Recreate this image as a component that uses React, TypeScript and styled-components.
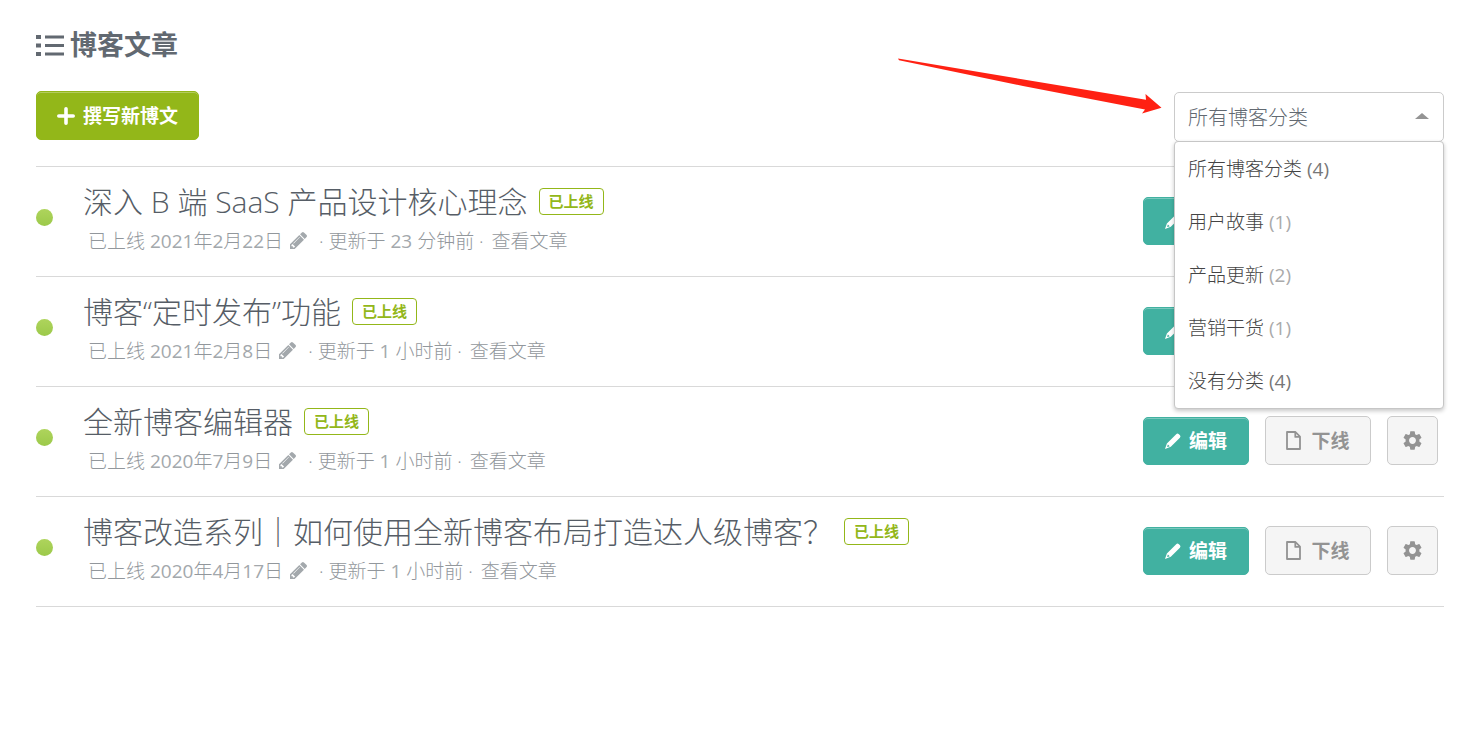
import React, { useState } from "react";
import styled, { createGlobalStyle } from "styled-components";
import { MdSettings } from "react-icons/md";

const GlobalStyle = createGlobalStyle`
  *, *::before, *::after { box-sizing: border-box; }
  body {
    margin: 0;
    background: #fff;
    color: #626971;
    font-family: "Open Sans", "Noto Sans CJK SC", sans-serif;
    font-size: 19px;
    font-weight: 400;
  }
  button, select { font-family: inherit; }
  h1, h2, p, ul { margin: 0; padding: 0; }
  ul { list-style: none; }
`;

const Page = styled.main`
  padding: 25px 37px 40px 36px;
`;

const Heading = styled.h1`
  display: flex;
  align-items: center;
  gap: 6px;
  height: 40px;
  font-size: 27px;
  line-height: 40px;
  font-weight: 700;
  color: #626971;
`;

const Toolbar = styled.div`
  display: flex;
  align-items: flex-start;
  justify-content: space-between;
  margin-top: 26px;
  padding-bottom: 24px;
`;

const Button = styled.button<{ $tone: "green" | "teal" | "plain"; $width: number }>`
  display: flex;
  align-items: center;
  justify-content: center;
  gap: ${(p) => (p.$tone === "plain" ? 10 : 8)}px;
  width: ${(p) => p.$width}px;
  height: ${(p) => (p.$tone === "teal" ? 48 : 49)}px;
  padding: 0;
  border: 1px solid
    ${(p) => ({ green: "#93b719", teal: "#41b1a1", plain: "#cbcbcb" })[p.$tone]};
  border-radius: 5px;
  background: ${(p) => ({ green: "#93b719", teal: "#41b1a1", plain: "#f5f5f5" })[p.$tone]};
  box-shadow: ${(p) => (p.$tone === "plain" ? "none" : "inset 0 1px 0 rgba(255, 255, 255, 0.3)")};
  color: ${(p) => (p.$tone === "plain" ? "#939393" : "#fff")};
  font-size: 19px;
  line-height: 24px;
  font-weight: 700;
  cursor: pointer;
`;

const Filter = styled.div`
  position: relative;
  width: 270px;
  margin-top: 1px;
`;

const FilterSelect = styled.select`
  display: block;
  width: 100%;
  height: 50px;
  padding: 0 13px;
  appearance: none;
  border: 1px solid #cbcbcb;
  border-radius: 5px;
  background: #fff;
  color: #626971;
  font-size: 20px;
  font-weight: 300;
  outline: none;
`;

const Caret = styled.span`
  position: absolute;
  top: 21px;
  right: 15px;
  border: solid transparent;
  border-width: 0 7px 6px;
  border-bottom-color: #949494;
  pointer-events: none;
`;

const Menu = styled.ul`
  position: absolute;
  z-index: 2;
  top: 49px;
  left: 0;
  right: 0;
  padding: 1px 0 0;
  border: 1px solid #c6c6c6;
  border-radius: 4px;
  background: #fff;
  box-shadow: 0 2px 4px rgba(0, 0, 0, 0.22);
`;

const MenuItem = styled.button`
  display: block;
  width: 100%;
  height: 53px;
  padding: 0 13px;
  border: 0;
  background: none;
  color: #444;
  font-size: 19px;
  line-height: 53px;
  font-weight: 300;
  text-align: left;
  cursor: pointer;
`;

const Count = styled.span<{ $muted: boolean }>`
  font-weight: 400;
  color: ${(p) => (p.$muted ? "#aaa" : "#777")};
`;

const Arrow = styled.svg`
  position: absolute;
  top: -34px;
  right: calc(100% + 12px);
  pointer-events: none;
`;

const PostList = styled.ul`
  border-top: 1px solid #d9d9d9;
`;

const Post = styled.li`
  display: flex;
  align-items: center;
  height: 110px;
  padding-right: 6px;
  border-bottom: 1px solid #d9d9d9;
`;

const StatusDot = styled.span`
  width: 17px;
  height: 17px;
  margin: 0 30px 9px 0;
  border-radius: 50%;
  background: linear-gradient(#aed45c, #9cc94a);
`;

const PostBody = styled.div`
  flex: 1;
  min-width: 0;
  padding-bottom: 8px;
`;

const TitleLine = styled.div`
  display: flex;
  align-items: center;
  gap: 11px;
`;

const PostTitle = styled.h2`
  font-size: 30px;
  line-height: 46px;
  font-weight: 300;
  color: #565d66;
`;

const Badge = styled.span`
  height: 27px;
  padding: 0 9px;
  border: 1px solid #93b719;
  border-radius: 4px;
  color: #93b719;
  font-size: 15px;
  line-height: 25px;
  font-weight: 700;
`;

const Meta = styled.p`
  display: flex;
  align-items: center;
  padding-left: 5px;
  font-size: 19px;
  line-height: 32px;
  font-weight: 300;
  color: #92979c;
  white-space: pre;
`;

const Digits = styled.span`
  font-weight: 400;
  color: #a3a8ac;
`;

const DateButton = styled.button`
  display: flex;
  margin: 0 12px 0 7px;
  padding: 0;
  border: 0;
  background: none;
  color: #a3a8ac;
  cursor: pointer;
`;

const ViewLink = styled.a`
  margin-left: 3px;
  color: inherit;
  text-decoration: none;
`;

const TitleLink = styled.a`
  color: inherit;
  text-decoration: none;
`;

const Actions = styled.div`
  display: flex;
  align-items: center;
  gap: 16px;
  padding-bottom: 2px;
`;

const ListIcon = () => (
  <svg width="28" height="21" viewBox="0 0 28 21" fill="currentColor" aria-hidden="true">
    <path d="M0 0h5v4H0zM9 .5h19v3H9zM0 8.500h5v4H0zM9 9h19v3H9zM0 17h5v4H0zM9 17.500h19v3H9z" />
  </svg>
);

const PlusIcon = () => (
  <svg width="18" height="18" viewBox="0 0 18 18" aria-hidden="true">
    <path d="M9 1.800V16.200M1.800 9H16.200" stroke="currentColor" strokeWidth="3.600" strokeLinecap="round" />
  </svg>
);

const DatePencil = () => (
  <svg width="17" height="17" viewBox="128 148 1516 1516" fill="currentColor" aria-hidden="true">
    <path d="M491 1536l91-91-235-235-91 91v107h128v128h107zm523-928q0-22-22-22-10 0-17 7l-542 542q-7 7-7 17 0 22 22 22 10 0 17-7l542-542q7-7 7-17zm-54-192l416 416-832 832h-416v-416l832-832zm683 96q0 53-37 90l-166 166-416-416 166-165q36-38 90-38 53 0 91 38l235 234q37 39 37 91z" />
  </svg>
);

const EditPencil = () => (
  <svg width="16" height="16" viewBox="0 0 16 16" fill="currentColor" aria-hidden="true">
    <path
      fillRule="evenodd"
      d="M11.200 1.200Q12.400 0 13.600 1L15 2.300Q16 3.500 14.900 4.700L5.800 13.700L0 16L1.900 10.400zM2.900 11.400L2.100 13.500L2.700 14.100L4.700 13.200z"
    />
  </svg>
);

const FileIcon = () => (
  <svg width="15" height="19" viewBox="0 0 15 19" fill="none" stroke="currentColor" strokeWidth="1.800" aria-hidden="true">
    <path strokeLinejoin="round" d="M1 1h8.500L14 5.700V18H1zM9.300 1.200v4.700H14" />
  </svg>
);

// Sets the numerals of a date or a duration one weight heavier than the text.
const Numbered = ({ text }: { text: string }) => (
  <span>
    {text.split(/(\d+)/).map((part, i) => (i % 2 ? <Digits key={i}>{part}</Digits> : part))}
  </span>
);

const categories = [
  { name: "所有博客分类", count: 4, muted: false },
  { name: "用户故事", count: 1, muted: true },
  { name: "产品更新", count: 2, muted: true },
  { name: "营销干货", count: 1, muted: true },
  { name: "没有分类", count: 4, muted: false },
];

const posts = [
  { title: "深入 B 端 SaaS 产品设计核心理念", date: "2021年2月22日", updated: "23 分钟前" },
  { title: "博客“定时发布”功能", date: "2021年2月8日", updated: "1 小时前" },
  { title: "全新博客编辑器", date: "2020年7月9日", updated: "1 小时前" },
  { title: "博客改造系列｜如何使用全新博客布局打造达人级博客？", date: "2020年4月17日", updated: "1 小时前" },
];

export default function App() {
  const [category, setCategory] = useState(categories[0].name);

  return (
    <Page lang="zh-CN">
      <GlobalStyle />
      <Heading>
        <ListIcon />
        博客文章
      </Heading>
      <Toolbar>
        <Button type="button" $tone="green" $width={163}>
          <PlusIcon />
          撰写新博文
        </Button>
        <Filter>
          <FilterSelect
            aria-label="博客分类"
            value={category}
            onChange={(e) => setCategory(e.target.value)}
          >
            {categories.map((c) => (
              <option key={c.name}>{c.name}</option>
            ))}
          </FilterSelect>
          <Caret />
          <Menu>
            {categories.map((c) => (
              <li key={c.name}>
                <MenuItem type="button" onClick={() => setCategory(c.name)}>
                  {c.name} <Count $muted={c.muted}>({c.count})</Count>
                </MenuItem>
              </li>
            ))}
          </Menu>
          <Arrow width="264" height="57" viewBox="0 0 264 57" aria-hidden="true">
            <path fill="#ff2113" d="M0 .6L248 41.800L247.500 36L263.500 49.700L244 55.500L247 51.500L125 28L1 2.200z" />
          </Arrow>
        </Filter>
      </Toolbar>
      <PostList>
        {posts.map((post) => (
          <Post key={post.title}>
            <StatusDot />
            <PostBody>
              <TitleLine>
                <PostTitle>
                  <TitleLink href="#">{post.title}</TitleLink>
                </PostTitle>
                <Badge>已上线</Badge>
              </TitleLine>
              <Meta>
                <Numbered text={`已上线 ${post.date}`} />
                <DateButton type="button" aria-label="修改日期">
                  <DatePencil />
                </DateButton>
                <Numbered text={`· 更新于 ${post.updated} · `} />
                <ViewLink href="#">查看文章</ViewLink>
              </Meta>
            </PostBody>
            <Actions>
              <Button type="button" $tone="teal" $width={106}>
                <EditPencil />
                编辑
              </Button>
              <Button type="button" $tone="plain" $width={106}>
                <FileIcon />
                下线
              </Button>
              <Button type="button" $tone="plain" $width={51} aria-label="设置">
                <MdSettings size={23} />
              </Button>
            </Actions>
          </Post>
        ))}
      </PostList>
    </Page>
  );
}
